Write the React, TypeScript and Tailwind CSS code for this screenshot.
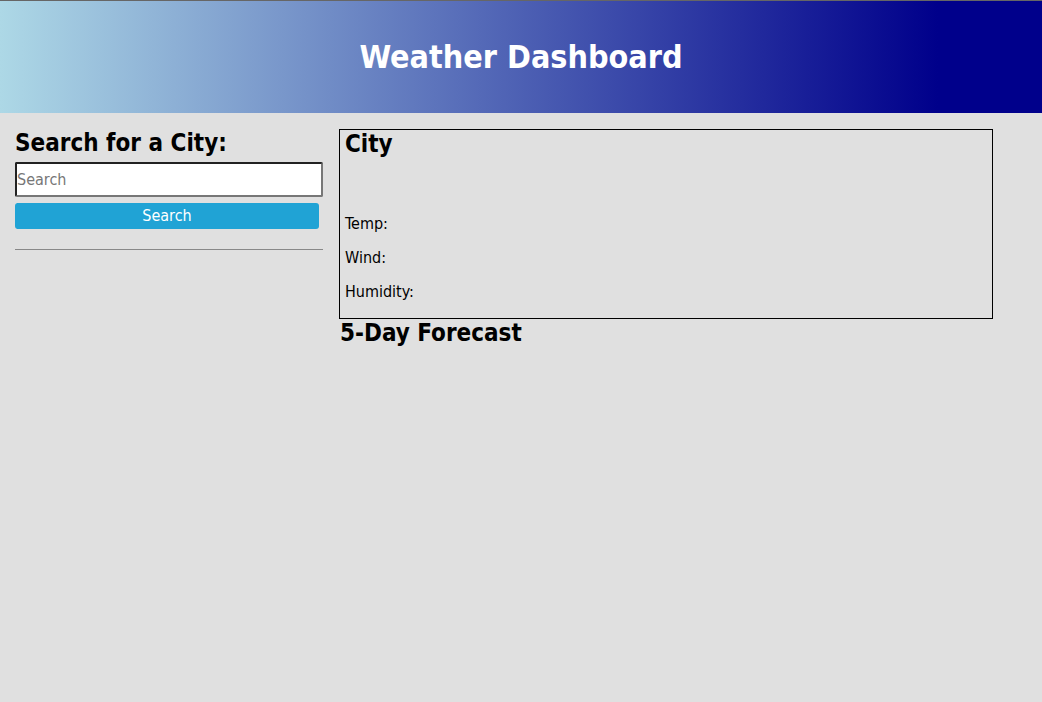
import React from 'react';

const font = { fontFamily: '"DejaVu Sans Condensed", "DejaVu Sans", sans-serif' };

const WeatherInfo: React.FC = () => (
  <div className="flex-1 max-w-[654px]">
    <div className="border border-black px-[5px] pb-[1px]">
      <h2 className="text-[24px] font-bold leading-[29px] text-black">City</h2>
      <div className="h-[40px]" />
      <p className="my-4 text-[16px] leading-[18px]">Temp:</p>
      <p className="my-4 text-[16px] leading-[18px]">Wind:</p>
      <p className="my-4 text-[16px] leading-[18px]">Humidity:</p>
    </div>
    <h2 className="pl-[1px] text-[24px] font-bold leading-[29px] text-black">5-Day Forecast</h2>
  </div>
);

const App: React.FC = () => {
  return (
    <div className="min-h-[702px] bg-[#e0e0e0] text-black" style={font}>
      <header className="h-[113px] border-t border-[#666] bg-linear-to-r/srgb from-[#add8e6] from-0% to-[#00008b] to-90% flex items-center justify-center">
        <h1 className="text-[32px] font-bold text-white">Weather Dashboard</h1>
      </header>
      <main className="flex gap-4 pl-[15px] pt-[16px]">
        <aside className="w-[308px] shrink-0">
          <h2 className="text-[24px] font-bold leading-[29px]">Search for a City:</h2>
          <input
            type="text"
            placeholder="Search"
            className="mt-[4px] block w-[308px] h-[35px] bg-white border-2 border-[#777] border-t-[#222] border-l-[#222] rounded-[2px] px-0 text-[16px] placeholder:text-[#777]"
          />
          <button className="mt-[6px] block w-[304px] h-[26px] rounded-[3px] bg-[#20a3d5] text-white text-[16px]">
            Search
          </button>
          <hr className="mt-[20px] border-t border-[#888]" />
        </aside>
        <WeatherInfo />
      </main>
    </div>
  );
};

export default App;
